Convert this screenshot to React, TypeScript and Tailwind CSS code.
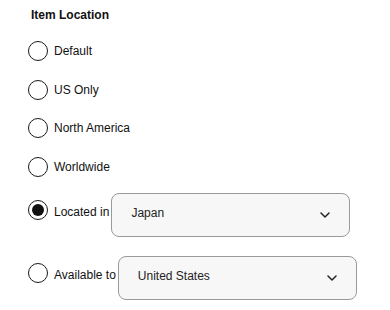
import React, { useState } from 'react';

type Option = { id: string; label: string; select?: string };

const options: Option[] = [
  { id: 'default', label: 'Default' },
  { id: 'us', label: 'US Only' },
  { id: 'na', label: 'North America' },
  { id: 'ww', label: 'Worldwide' },
  { id: 'located', label: 'Located in', select: 'Japan' },
  { id: 'available', label: 'Available to', select: 'United States' },
];

const Radio: React.FC<{ checked: boolean }> = ({ checked }) => (
  <span className="w-[20px] h-[20px] shrink-0 rounded-full border-[1.5px] border-[#1a1a1a] bg-white flex items-center justify-center">
    {checked && <span className="w-[12px] h-[12px] rounded-full bg-[#111]"></span>}
  </span>
);

const Chevron = () => (
  <svg width="10" height="6" viewBox="0 0 10 6" fill="none">
    <path d="M1 1l4 4 4-4" stroke="#222" strokeWidth="1.5" strokeLinecap="round" strokeLinejoin="round" />
  </svg>
);

export default function App() {
  const [value, setValue] = useState('located');

  return (
    <div className="w-[390px] h-[310px] bg-white pl-[28px] pt-[7px] text-[12px] text-[#111]" style={{ fontFamily: '"Liberation Sans", Arial, sans-serif' }}>
      <div className="pl-[3px] font-bold leading-[16px]">Item Location</div>

      <div className="flex flex-col gap-[18.5px] mt-[18px]">
        {options.filter(o => !o.select).map(o => (
          <label key={o.id} className="flex items-center gap-[6px] h-[20px] cursor-pointer" onClick={() => setValue(o.id)}>
            <Radio checked={value === o.id} />
            <span>{o.label}</span>
          </label>
        ))}
      </div>

      <div className="flex flex-col gap-[19px] mt-[16.5px]">
        {options.filter(o => o.select).map(o => (
          <div key={o.id} className="flex items-center cursor-pointer" onClick={() => setValue(o.id)}>
            <span className="mb-[11px]"><Radio checked={value === o.id} /></span>
            <span className="ml-[6px] mb-[6px]">{o.label}</span>
            <div className="ml-[2px] w-[239px] h-[44px] rounded-[8px] border border-[#9a9a9a] bg-[#f7f7f7] flex items-center justify-between pl-[19px] pr-[19px]">
              <span className="mb-[4px] text-[#222]">{o.select}</span>
              <Chevron />
            </div>
          </div>
        ))}
      </div>
    </div>
  );
}
